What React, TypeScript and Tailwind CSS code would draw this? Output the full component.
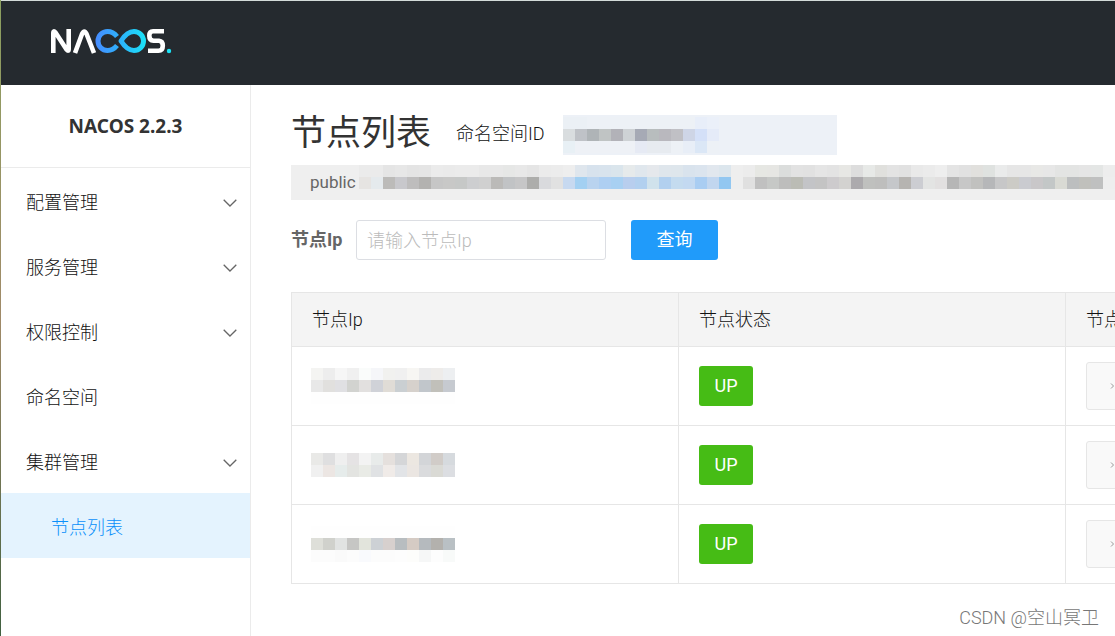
import { useState } from "react";

interface MenuItem {
  label: string;
  children?: string[];
}

interface ClusterNode {
  id: number;
  state: string;
  mask: string[][];
}

const menu: MenuItem[] = [
  { label: "配置管理", children: [] },
  { label: "服务管理", children: [] },
  { label: "权限控制", children: [] },
  { label: "命名空间" },
  { label: "集群管理", children: ["节点列表"] },
];

const toCells = (row: string) => row.split(" ").map((c) => `#${c}`);

const blank = Array(12).fill("#fefefe");

// Redacted values are shown as rows of coloured blocks
const nodes: ClusterNode[] = [
  {
    id: 1,
    state: "UP",
    mask: [
      toCells("f4f4f2 ededed f6f6f6 f0f0f0 fafcfb f5f6f9 f1f1ef f0f0f0 f7f6f3 ebebec eeecea edeff1"),
      toCells("e8e8e8 e1e0de e0e0e3 d2d3d0 e2e0df d0d2d8 e0dcd6 cacfd2 d6d1cc c1c6cb c1c0ba c6cad0"),
      blank,
    ],
  },
  {
    id: 2,
    state: "UP",
    mask: [
      toCells("e9e9e7 dfdfe0 efefef e5e3e4 f3f3f3 e8ebea e5e0dd d5d6d8 ece7e1 d3d5d8 d1ccc8 d6dade"),
      toCells("f0f0f0 ece6e3 e6eceb e3e4e1 e9ebe6 e0e2e4 f0ebe8 e2e4e7 ebe6e2 dadbdd dadad5 dcdee2"),
    ],
  },
  {
    id: 3,
    state: "UP",
    mask: [
      blank,
      toCells("dedfd9 d0d1cc e1e3e2 c6c6c4 e2e4dc cdd1d5 d7d0ce b8bdc0 d5cbc4 b5babe b3b1ad b9c0c4"),
      toCells("fcfcfc fcfcfc fafafa fcfcfc f9fafd fcfcfc fcfcfc fdfdfd fdfdfb f6f7f7 fdfdfd f8faf9"),
    ],
  },
];

const namespaceMask = [
  toCells("ebf0f5 ebf0f5 edf1f6 edf1f6 edf1f6 edf1f6 edf1f6 edf1f6 edf1f6 edf1f6 edf1f6 e8eef9 ebf0f9"),
  toCells("d9dddf bfc2c7 afb4b7 c0c4c4 b2b2b8 ced2d5 a6aab5 b8bdbe b9b8be c0c0c5 ced5e6 d4e0f8 e5ebf8"),
  toCells("e8f0f5 eef1f6 eef1f6 eef1f6 eef1f6 eef1f6 e6eaf4 e7ebf0 e7ebf0 edf1f6 e8eef7 dbe7f6 edf1f6"),
];

const infoMask = [
  toCells(
    "ebebeb ebebeb e5e5e5 e7e7e7 e4e4e4 e5e5e5 ebebeb eaeaea ebebeb ebebeb e8e8e8 e8e8e8 e6e7e6 e8e8e8 e5e5e5 ebebeb ececec " +
      "eeeeee dfe6ed d7e2ed d8e3ed dae5ec e6eaeb e0e7ed e5e8ec dfe6ec dee6ec d9e3ed dbe4ee e1e7ee dce6ed eeeeee ececec " +
      "e6e7e3 e6e6e3 dbdddc e2e2e2 e1e1e1 e5e5e5 e3e3e3 e7e7e4 dddddd e7e9e7 e0e0dd e3e3e3 e1e1e1 e9e9e9 ebebeb eeeeee " +
      "e4e4e4 e1e1e1 e1e0dd dfe2e0 eaebeb e6e6e6 e6e6e6 e8e8e6 e7e7e7 e3e4e3 e3e4e3 e5e5e5 e4e6e5 ededed"
  ),
  toCells(
    "e6e4e2 e5eaed bcbbb9 c8c8cc bebdbd b3b2b0 c6c6c6 c8c8c7 c6c8c7 cdced0 d0d0d0 bbbab8 c1c3c5 c6c6c7 adadab d9dadd e1e1e1 " +
      "c7d9f0 a3d0f2 b9d3ef aecff2 a8d0f2 b8ceee b2d0ef d0e2ec b2d0ef c4dbef c3d9f1 a9cdf2 c1d6ef 92c7f1 eeeeee e0e0e0 " +
      "c0c0c0 c6c8c6 bdbdbc bbbcb5 c3c4c7 c4c4c4 cdcbcd d3d2d0 acaaad bfc0be bebebd c5c7ca b6b4b1 cccdd2 e3e4e3 e2e0e0 " +
      "b6b6b6 c7c7c7 c1c1bf b6b7b9 c7c7c8 cccbc6 cacbd0 c9c7c9 c3c7c7 d9dad4 bcbebf c0c0bc bfc0c0 eeeeee"
  ),
];

function Mosaic({ rows }: { rows: string[][] }) {
  return (
    <div aria-hidden="true">
      {rows.map((row, i) => (
        <div key={i} className="flex">
          {row.map((color, j) => (
            <span key={j} className="block h-3 w-3 shrink-0" style={{ backgroundColor: color }} />
          ))}
        </div>
      ))}
    </div>
  );
}

function Logo() {
  return (
    <svg viewBox="0 0 122 26" className="h-[26px] w-[122px]" fill="none" role="img" aria-label="NACOS">
      <defs>
        <linearGradient id="nacos-loop" x1="45" y1="0" x2="95" y2="0" gradientUnits="userSpaceOnUse">
          <stop offset="0" stopColor="#468cff" />
          <stop offset="0.5" stopColor="#2cb4fb" />
          <stop offset="1" stopColor="#1be3f7" />
        </linearGradient>
      </defs>
      <g stroke="#fff" strokeWidth="4.600" strokeLinejoin="round">
        <path d="M2.300 25V5Q2.300 2 4.500 4.500L15.500 21.500Q17.700 24 17.700 21V1" />
        <path d="M24 25L31 6Q33.300 1 35.600 6L43 25" />
        <path d="M113 3.300H102Q98.300 3.300 98.300 7.700Q98.300 12.500 102.500 12.700H108Q111.800 13 111.800 17.700Q111.800 22.700 107.500 22.700H97" />
      </g>
      <g stroke="url(#nacos-loop)" strokeWidth="5">
        <path d="M66 8.500Q62 3.500 56.500 3.500A9.500 9.500 0 0 0 56.500 22.500Q62 22.500 66 17.500" />
        <path d="M70 13Q76 3.500 83 3.500A9.500 9.500 0 0 1 83 22.500Q76 22.500 70 13Z" strokeLinejoin="round" />
      </g>
      <circle cx="118" cy="23" r="2.200" fill="#1be3f7" />
    </svg>
  );
}

function ChevronDown() {
  return (
    <svg viewBox="0 0 14 8" className="h-2 w-3.5" fill="none" stroke="#666" strokeWidth="1.300" aria-hidden="true">
      <path d="M.7.7L7 7L13.300.7" />
    </svg>
  );
}

function Sidebar() {
  const [active, setActive] = useState("节点列表");

  return (
    <aside className="w-[250px] shrink-0 border-r border-[#ebebeb] bg-white">
      <h2 className="flex h-[83px] items-center justify-center border-b border-[#ebebeb] font-['Noto_Sans'] text-[19px] font-bold text-[#333]">
        NACOS 2.2.3
      </h2>
      <nav>
        <ul>
          {menu.map((item) => (
            <li key={item.label}>
              <button
                type="button"
                className="flex h-[65px] w-full items-center justify-between pt-1 pr-[13px] pl-[25px] text-left"
                onClick={() => !item.children && setActive(item.label)}
              >
                {item.label}
                {item.children && <ChevronDown />}
              </button>
              {item.children?.map((child) => (
                <a
                  key={child}
                  href="#"
                  className={`flex h-[65px] items-center pt-1 pl-[50px] ${
                    active === child ? "bg-[#e4f3fe] text-[#0a90fa]" : ""
                  }`}
                  onClick={() => setActive(child)}
                >
                  {child}
                </a>
              ))}
            </li>
          ))}
        </ul>
      </nav>
    </aside>
  );
}

export default function App() {
  const [ip, setIp] = useState("");

  return (
    <div className="relative flex h-screen min-h-[600px] overflow-hidden bg-white font-[Roboto,'Noto_Sans_CJK_SC',sans-serif] text-[18px] leading-6 font-light text-[#111]">
      <div className="w-px shrink-0 bg-linear-to-b from-[#8ba060] via-[#a08a68] to-[#406040]" />
      <div className="flex min-w-0 flex-1 flex-col border-t border-[#d3dbd9]">
        <header className="flex h-[84px] shrink-0 items-center bg-[#252a2f] pb-1 pl-[50px]">
          <Logo />
        </header>

        <div className="flex min-h-0 flex-1">
          <Sidebar />

          <main className="min-w-0 flex-1 overflow-hidden pt-5 pl-10">
            <div className="flex h-[50px]">
              <h1 className="pt-1 text-[35px] leading-[50px] font-normal text-[#333]">节点列表</h1>
              <span className="ml-[25px] w-[89px] pt-1 leading-[50px] whitespace-nowrap">命名空间ID</span>
              <div className="ml-[18px] h-10 w-[274px] shrink-0 self-end bg-[#edf1f7] pt-0.5">
                <Mosaic rows={namespaceMask} />
              </div>
            </div>

            <div className="mt-2.5 flex h-[35px] overflow-hidden bg-[#efefef] pl-[19px] font-normal text-[#666]">
              <span className="w-[49px] shrink-0 pt-[5px] text-[17px]">public</span>
              <Mosaic rows={infoMask} />
            </div>

            <form className="mt-5 flex h-10 items-center" onSubmit={(e) => e.preventDefault()}>
              <label htmlFor="node-ip" className="w-[65px] font-bold text-[#666]">
                节点Ip
              </label>
              <input
                id="node-ip"
                type="text"
                value={ip}
                onChange={(e) => setIp(e.target.value)}
                placeholder="请输入节点Ip"
                className="h-10 w-[250px] rounded-[3px] border border-[#dcdee3] px-2.5 placeholder:text-[#bbb]"
              />
              <button type="submit" className="ml-[25px] h-10 w-[87px] rounded-[3px] bg-[#209bfa] font-normal text-white">
                查询
              </button>
            </form>

            <table className="mt-8 w-[1162px] table-fixed border-collapse text-left">
              <thead>
                <tr className="h-[54px] bg-[#f4f4f4]">
                  {["节点Ip", "节点状态", "节点元数据"].map((title) => (
                    <th key={title} className="border border-[#e6e6e6] px-5 font-light">
                      {title}
                    </th>
                  ))}
                </tr>
              </thead>
              <tbody>
                {nodes.map((node) => (
                  <tr key={node.id} className="h-[79px]">
                    <td className="border border-[#e6e6e6] px-[19px]">
                      <Mosaic rows={node.mask} />
                    </td>
                    <td className="border border-[#e6e6e6] px-5">
                      <span className="flex h-10 w-[54px] items-center justify-center rounded-[3px] bg-[#46bc15] font-normal text-white">
                        {node.state}
                      </span>
                    </td>
                    <td className="border border-[#e6e6e6] px-5">
                      <button
                        type="button"
                        aria-label="展开"
                        className="flex h-12 w-full items-center rounded-[3px] border border-[#e6e6e6] bg-[#f9f9f9] pl-[23px]"
                      >
                        <svg viewBox="0 0 5 8" className="h-2 w-[5px]" fill="none" stroke="#999" aria-hidden="true">
                          <path d="M1 1.500L3.500 4L1 6.500" />
                        </svg>
                      </button>
                    </td>
                  </tr>
                ))}
              </tbody>
            </table>
          </main>
        </div>
      </div>

      <p className="absolute right-4 bottom-1.5 text-[#777]">CSDN @空山冥卫</p>
    </div>
  );
}
